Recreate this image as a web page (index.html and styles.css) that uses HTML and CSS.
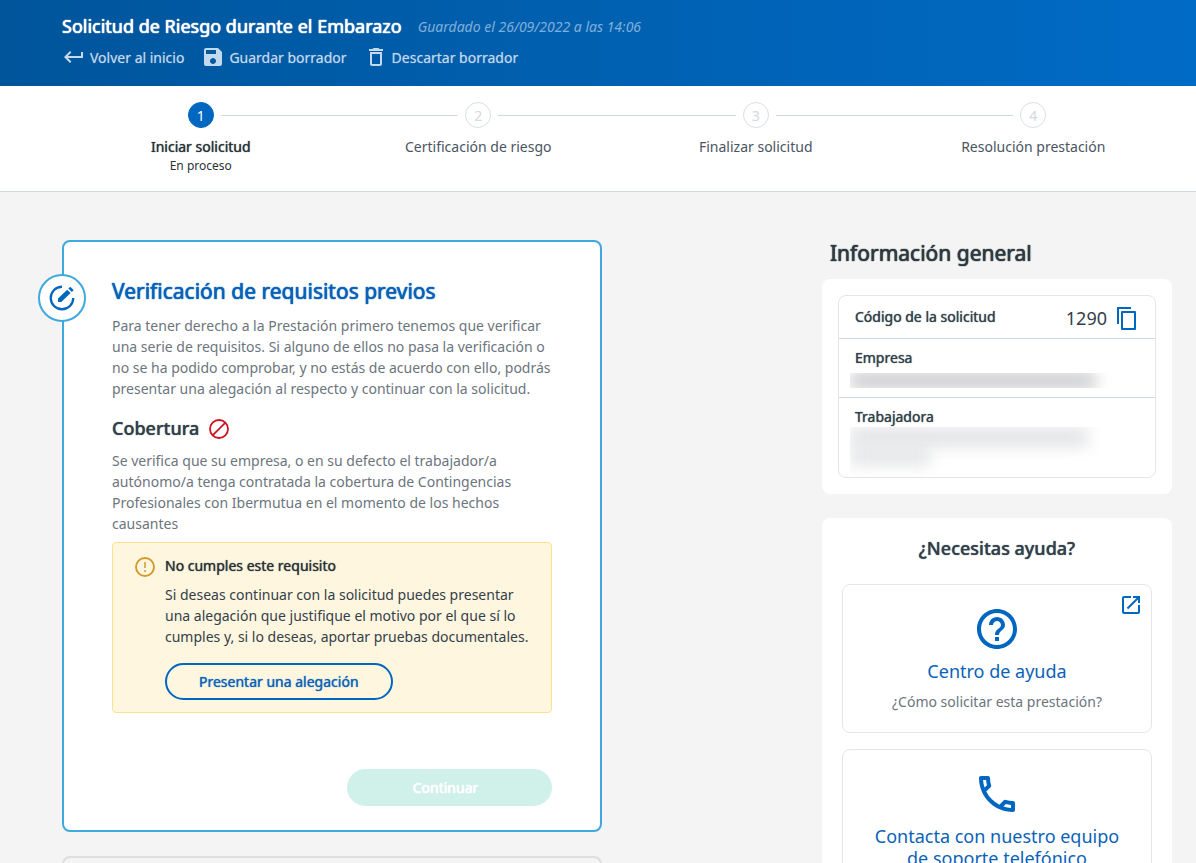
FILE: index.html
```html
<!DOCTYPE html>
<html lang="es">
<head>
<meta charset="utf-8">
<meta name="viewport" content="width=device-width, initial-scale=1">
<title>Solicitud de Riesgo durante el Embarazo</title>
<link rel="stylesheet" href="styles.css">
</head>
<body>
<header class="topbar">
  <div class="topbar-heading">
    <h1 class="topbar-title">Solicitud de Riesgo durante el Embarazo</h1>
    <span class="topbar-saved">Guardado el 26/09/2022 a las 14:06</span>
  </div>
  <nav class="topbar-actions">
    <a class="action" href="#inicio">
      <svg class="icon-24" viewBox="0 0 24 24" fill="currentColor"><path d="M19 7v4H5.830l3.580-3.590L8 6l-6 6 6 6 1.410-1.410L5.830 13H21V7z"/></svg>
      Volver al inicio</a>
    <button class="action" type="button">
      <svg class="icon-24" viewBox="0 0 24 24" fill="currentColor"><path d="M17 3H5a2 2 0 0 0-2 2v14a2 2 0 0 0 2 2h14a2 2 0 0 0 2-2V7zm-5 16c-1.660 0-3-1.340-3-3s1.340-3 3-3 3 1.340 3 3-1.340 3-3 3zm3-10H5V5h10z"/></svg>
      Guardar borrador</button>
    <button class="action" type="button">
      <svg class="icon-24" viewBox="0 0 24 24" fill="currentColor"><path d="M6 19c0 1.100.9 2 2 2h8c1.100 0 2-.9 2-2V7H6zM8 9h8v10H8zm7.500-5-1-1h-5l-1 1H5v2h14V4z"/></svg>
      Descartar borrador</button>
  </nav>
</header>

<ol class="stepper">
  <li class="step step-active">
    <div class="step-track"><span class="step-number">1</span></div>
    <span class="step-label">Iniciar solicitud</span>
    <span class="step-status">En proceso</span>
  </li>
  <li class="step">
    <div class="step-track"><span class="step-number">2</span></div>
    <span class="step-label">Certificación de riesgo</span>
  </li>
  <li class="step">
    <div class="step-track"><span class="step-number">3</span></div>
    <span class="step-label">Finalizar solicitud</span>
  </li>
  <li class="step">
    <div class="step-track"><span class="step-number">4</span></div>
    <span class="step-label">Resolución prestación</span>
  </li>
</ol>

<div class="content">
  <main class="main">
    <section class="card card-current">
      <span class="card-badge">
        <svg class="icon-28" viewBox="0 0 28 28" fill="none"><path d="M14 1.500A12.500 12.500 0 1 0 26.500 14" transform="translate(1.400 1.400) scale(.9)" stroke="currentColor" stroke-width="2.600"/><path d="M10 14.500 19.200 5.700l3.400 3.400-9.300 8.800H10zM20.400 4.600l1.900-1.800 3.400 3.400-1.900 1.800z" fill="currentColor"/></svg>
      </span>
      <h2 class="card-title">Verificación de requisitos previos</h2>
      <p class="card-text">Para tener derecho a la Prestación primero tenemos que verificar una serie de requisitos. Si alguno de ellos no pasa la verificación o no se ha podido comprobar, y no estás de acuerdo con ello, podrás presentar una alegación al respecto y continuar con la solicitud.</p>
      <h3 class="requirement">Cobertura
        <svg class="icon-20 icon-denied" viewBox="0 0 20 20" fill="none" stroke="currentColor" stroke-width="1.800"><circle cx="10" cy="10" r="9"/><path d="M3.600 16.400 16.400 3.600"/></svg>
      </h3>
      <p class="card-text">Se verifica que su empresa, o en su defecto el trabajador/a autónomo/a tenga contratada la cobertura de Contingencias Profesionales con Ibermutua en el momento de los hechos causantes</p>
      <div class="alert" role="alert">
        <svg class="icon-20 icon-warning" viewBox="0 0 20 20" fill="none" stroke="currentColor"><circle cx="10" cy="10" r="9" stroke-width="1.900"/><path d="M10 5v6M10 13v2" stroke-width="1.500"/></svg>
        <div class="alert-body">
          <h4 class="alert-title">No cumples este requisito</h4>
          <p class="alert-text">Si deseas continuar con la solicitud puedes presentar una alegación que justifique el motivo por el que sí lo cumples y, si lo deseas, aportar pruebas documentales.</p>
          <button class="button button-outline" type="button">Presentar una alegación</button>
        </div>
      </div>
      <div class="card-footer">
        <button class="button button-primary" type="button" disabled>Continuar</button>
      </div>
    </section>
    <section class="card card-pending"></section>
  </main>

  <aside class="sidebar">
    <h2 class="sidebar-title">Información general</h2>
    <div class="panel">
      <dl class="details">
        <div class="detail detail-inline">
          <dt class="detail-name">Código de la solicitud</dt>
          <dd class="detail-code">1290
            <button class="copy" type="button" aria-label="Copiar código">
              <svg class="icon-24" viewBox="0 0 24 24" fill="none" stroke="currentColor" stroke-width="2"><path d="M3 18V2h13"/><path d="M7 6h13v17H7z" stroke-linejoin="round"/></svg>
            </button>
          </dd>
        </div>
        <div class="detail">
          <dt class="detail-name">Empresa</dt>
          <dd class="redacted redacted-line"><span class="smudge smudge-dark"></span></dd>
        </div>
        <div class="detail">
          <dt class="detail-name">Trabajadora</dt>
          <dd class="redacted redacted-block"><span class="smudge smudge-wide"></span><span class="smudge smudge-short"></span></dd>
        </div>
      </dl>
    </div>
    <section class="panel help">
      <h3 class="help-title">¿Necesitas ayuda?</h3>
      <a class="help-card" href="#ayuda">
        <svg class="icon-24 icon-external" viewBox="0 0 24 24" fill="currentColor"><path d="M19 19H5V5h7V3H5a2 2 0 0 0-2 2v14a2 2 0 0 0 2 2h14c1.100 0 2-.9 2-2v-7h-2zM14 3v2h3.590l-9.830 9.830 1.410 1.410L19 6.410V10h2V3z"/></svg>
        <svg class="icon-48" viewBox="0 0 24 24" fill="currentColor"><path d="M11 18h2v-2h-2zm1-16C6.480 2 2 6.480 2 12s4.480 10 10 10 10-4.480 10-10S17.520 2 12 2zm0 18c-4.410 0-8-3.590-8-8s3.590-8 8-8 8 3.590 8 8-3.590 8-8 8zm0-14c-2.210 0-4 1.790-4 4h2c0-1.100.9-2 2-2s2 .9 2 2c0 2-3 1.750-3 5h2c0-2.250 3-2.500 3-5 0-2.210-1.790-4-4-4z"/></svg>
        <span class="help-name">Centro de ayuda</span>
        <span class="help-text">¿Cómo solicitar esta prestación?</span>
      </a>
      <a class="help-card" href="#telefono">
        <svg class="icon-48" viewBox="0 0 24 24" fill="currentColor"><path d="M6.540 5c.06.89.21 1.760.45 2.590l-1.200 1.200c-.41-1.200-.67-2.470-.76-3.790h1.510m9.860 12.020c.85.24 1.720.39 2.600.45v1.490c-1.320-.09-2.590-.35-3.800-.75l1.200-1.190M7.500 3H4c-.55 0-1 .45-1 1 0 9.390 7.610 17 17 17 .55 0 1-.45 1-1v-3.490c0-.55-.45-1-1-1-1.240 0-2.450-.2-3.570-.57a.84.84 0 0 0-.31-.05c-.26 0-.51.1-.71.29l-2.200 2.200a15.150 15.150 0 0 1-6.590-6.590l2.200-2.200c.28-.28.36-.67.25-1.020A11.360 11.360 0 0 1 8.500 4c0-.55-.45-1-1-1z"/></svg>
        <span class="help-name">Contacta con nuestro equipo de soporte telefónico</span>
      </a>
    </section>
  </aside>
</div>
</body>
</html>
```
FILE: styles.css
```css
* { box-sizing: border-box; }
html { height: 100%; overflow: hidden; }
body {
  margin: 0;
  height: 100%;
  overflow: hidden;
  background: #f4f4f4;
  color: #33404a;
  font: 14px/21px "Noto Sans", "Open Sans", sans-serif;
}
h1, h2, h3, h4, p, dl, dd, ol { margin: 0; padding: 0; }
h1, h2, h3, h4 { font-weight: 500; }
button { font: inherit; cursor: pointer; }
svg { display: block; flex: none; }

.icon-20 { width: 20px; height: 20px; }
.icon-24 { width: 24px; height: 24px; }
.icon-28 { width: 28px; height: 28px; }
.icon-48 { width: 48px; height: 48px; }

.requirement, .alert-title, .button-outline,
.help-title, .detail-name, .step-active .step-label {
  text-shadow: 0 0 1px currentColor;
}
.topbar-title, .card-title, .sidebar-title, .button-primary {
  text-shadow: 0 0 1px currentColor, 0 0 1px currentColor;
}

.topbar {
  padding: 13px 24px 17px 62px;
  background: linear-gradient(90deg, #00559b, #006bc6);
  color: #fff;
}
.topbar-heading { display: flex; align-items: center; gap: 16px; }
.topbar-title { font-size: 18px; font-weight: 400; line-height: 27px; }
.topbar-saved { color: #7fb0da; font-style: italic; }
.topbar-actions { display: flex; gap: 17px; margin-top: 5px; }
.action {
  display: flex;
  align-items: center;
  gap: 4px;
  padding: 0;
  border: 0;
  background: none;
  color: #c3d9ec;
  text-shadow: 0 0 1px #6c9fcd;
  text-decoration: none;
}

.stepper {
  display: flex;
  height: 106px;
  padding: 16px 24px 0 62px;
  border-bottom: 1px solid #ced8e0;
  background: #fff;
  list-style: none;
}
.step {
  display: flex;
  flex: 1;
  flex-direction: column;
  align-items: center;
  color: #4a5562;
}
.step-track {
  display: flex;
  align-items: center;
  gap: 7px;
  width: 100%;
  margin-bottom: 8px;
}
.step-track::before, .step-track::after {
  content: "";
  flex: 1;
  height: 1px;
  background: #ced8e0;
}
.step:first-child .step-track::before,
.step:last-child .step-track::after { background: none; }
.step-number {
  display: flex;
  align-items: center;
  justify-content: center;
  width: 26px;
  height: 26px;
  border: 1px solid #d9dfe4;
  border-radius: 50%;
  color: #d3d9de;
}
.step-active { color: #2a3238; }
.step-active .step-number { border-color: #0067c0; background: #0067c0; color: #fff; }
.step-status { font-size: 12px; line-height: 18px; }

.content {
  display: flex;
  align-items: flex-start;
  justify-content: space-between;
  gap: 24px;
  padding: 48px 24px 0 62px;
}
.main { flex: 0 1 540px; }
.card { position: relative; border: 2px solid #dedede; border-radius: 8px; }
.card-current {
  padding: 34px 48px 24px;
  border-color: #3fa9df;
  background: #fff;
}
.card-pending { height: 120px; margin-top: 24px; }
.card-badge {
  position: absolute;
  top: 32px;
  left: -26px;
  display: flex;
  align-items: center;
  justify-content: center;
  width: 48px;
  height: 48px;
  border: 2px solid #3fa9df;
  border-radius: 50%;
  background: #fff;
  color: #0067c0;
}
.card-title { margin-bottom: 9px; color: #0a62b8; font-size: 21px; font-weight: 400; line-height: 30px; }
.card-text { color: #6c757d; }
.requirement {
  display: flex;
  align-items: center;
  gap: 10px;
  margin: 16px 0 8px;
  font-size: 18px;
  line-height: 27px;
}
.icon-denied { color: #cf1322; }
.alert {
  display: flex;
  gap: 10px;
  margin-top: 8px;
  padding: 12px 20px 12px 22px;
  border: 1px solid #fbe38e;
  border-radius: 4px;
  background: #fff6df;
}
.icon-warning { margin-top: 2px; color: #d29a2a; }
.alert-title { margin-bottom: 8px; font-size: 14px; font-weight: 400; line-height: 21px; color: #2a3238; }
.alert-text { margin-bottom: 16px; }
.button {
  height: 37px;
  border: 2px solid;
  border-radius: 19px;
}
.button-outline { padding: 0 32px; border-color: #0067c0; background: none; color: #0a62b8; }
.card-footer { display: flex; justify-content: flex-end; margin-top: 56px; }
.button-primary { width: 205px; padding: 0 16px 0 8px; border-color: #d0f1ea; background: #d0f1ea; color: #fff; }

.sidebar { flex: none; width: 350px; }
.sidebar-title { margin: -2px 0 11px 8px; font-size: 21px; font-weight: 400; line-height: 30px; color: #2f3a40; }
.panel { padding: 16px; border-radius: 8px; background: #fff; }
.details { border: 1px solid #e4e6e8; border-radius: 8px; overflow: hidden; }
.detail { padding: 8px 16px 0; border-top: 1px solid #ced8e0; }
.detail:first-child { border-top: 0; }
.detail-inline { display: flex; align-items: flex-start; justify-content: space-between; padding: 10px 16px 0; height: 42px; }
.detail-code { display: flex; align-items: center; gap: 8px; font-size: 18px; line-height: 24px; }
.copy { padding: 0; border: 0; background: none; color: #0067c0; }
.redacted { margin-left: -5px; overflow: hidden; }
.redacted-line { height: 15px; margin-top: 5px; margin-bottom: 9px; }
.redacted-block { height: 50px; }
.smudge { display: block; filter: blur(8px); background: #e3e4e6; }
.smudge-dark { width: 246px; height: 15px; background: #c4c5c8; }
.smudge-wide { width: 238px; height: 20px; }
.smudge-short { width: 80px; height: 18px; }

.help { margin-top: 24px; padding: 16px 20px; }
.help-title { margin: 1px 0 22px; font-size: 18px; line-height: 27px; text-align: center; }
.help-card {
  position: relative;
  display: flex;
  flex-direction: column;
  align-items: center;
  margin-bottom: 16px;
  padding: 20px 24px;
  border: 1px solid #e4e6e8;
  border-radius: 8px;
  color: #0a62b8;
  text-align: center;
  text-decoration: none;
}
.icon-48 { color: #0067c0; }
.icon-external { position: absolute; top: 8px; right: 8px; color: #0067c0; }
.help-name { margin-top: 7px; font-size: 18px; line-height: 22px; }
.help-text { margin-top: 9px; color: #6c757d; }
```
